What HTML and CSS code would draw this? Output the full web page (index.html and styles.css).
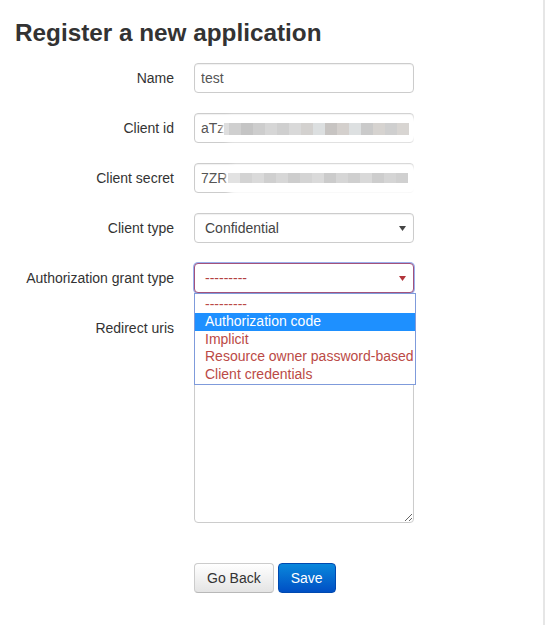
FILE: index.html
```html
<!DOCTYPE html>
<html lang="en">
<head>
<meta charset="utf-8">
<title>Register a new application</title>
<link rel="stylesheet" href="styles.css">
</head>
<body>
<div class="page">
  <h1 class="title">Register a new application</h1>
  <form class="form">
    <div class="row">
      <label class="label">Name</label>
      <input class="input" type="text" value="test">
    </div>
    <div class="row">
      <label class="label">Client id</label>
      <div class="field">
        <input class="input" type="text" value="aTz">
        <div class="haze haze-id"></div>
        <div class="mosaic mosaic-id"></div>
      </div>
    </div>
    <div class="row">
      <label class="label">Client secret</label>
      <div class="field">
        <input class="input" type="text" value="7ZR">
        <div class="haze haze-secret"></div>
        <div class="mosaic mosaic-secret"></div>
      </div>
    </div>
    <div class="row">
      <label class="label">Client type</label>
      <div class="select">
        <span>Confidential</span>
        <svg class="arrow" width="7" height="5" viewBox="0 0 7 5"><path d="M0 0H7L3.5 5Z" fill="#444"/></svg>
      </div>
    </div>
    <div class="row">
      <label class="label">Authorization grant type</label>
      <div class="field">
        <div class="select select-focus">
          <span>---------</span>
          <svg class="arrow" width="7" height="5" viewBox="0 0 7 5"><path d="M0 0H7L3.5 5Z" fill="#b2343a"/></svg>
        </div>
        <ul class="menu">
          <li class="opt">---------</li>
          <li class="opt opt-active">Authorization code</li>
          <li class="opt">Implicit</li>
          <li class="opt">Resource owner password-based</li>
          <li class="opt">Client credentials</li>
        </ul>
      </div>
    </div>
    <div class="row row-top">
      <label class="label">Redirect uris</label>
      <textarea class="textarea"></textarea>
    </div>
    <div class="actions">
      <button type="button" class="btn btn-default">Go Back</button>
      <button type="button" class="btn btn-primary">Save</button>
    </div>
  </form>
</div>
</body>
</html>
```

FILE: styles.css
```css
html, body {
  margin: 0;
  padding: 0;
  background: #fff;
}

body {
  font-family: "Liberation Sans", Arial, sans-serif;
  font-size: 14px;
  color: #333;
}

.page {
  box-sizing: border-box;
  width: 545px;
  height: 625px;
  border-right: 2px solid #e6e6e6;
  overflow: hidden;
}

.title {
  margin: 18px 0 0 15px;
  font-size: 24.3px;
  line-height: 30px;
  font-weight: bold;
  color: #333;
}

.form {
  margin-top: 15px;
}

.row {
  display: grid;
  grid-template-columns: 174px 220px;
  column-gap: 20px;
  align-items: center;
  margin-bottom: 20px;
}

.row-top {
  align-items: start;
}

.label {
  text-align: right;
  line-height: 30px;
  font-size: 14px;
  color: #333;
}

.field {
  position: relative;
  height: 30px;
}

.input,
.select,
.textarea {
  box-sizing: border-box;
  width: 220px;
  border: 1px solid #ccc;
  border-radius: 4px;
  background: #fff;
  font-family: "Liberation Sans", Arial, sans-serif;
  font-size: 14px;
  box-shadow: inset 0 1px 1px rgba(0, 0, 0, 0.06);
}

.input {
  display: block;
  height: 30px;
  padding: 0 6px;
  color: #555;
  outline: none;
}

.haze {
  position: absolute;
  background: #fff;
  border-radius: 10px;
  filter: blur(2px);
}

.haze-id {
  left: 28px;
  top: 3px;
  width: 198px;
  height: 26px;
}

.haze-secret {
  left: 32px;
  top: 2px;
  width: 194px;
  height: 30px;
}

.mosaic {
  position: absolute;
  height: 12px;
}

.mosaic-id {
  left: 30px;
  top: 10px;
  width: 185px;
  height: 12px;
  background: linear-gradient(90deg,
    #dedede 0 5px, #cfcfcf 5px 17px, #c4c4c4 17px 29px, #cdcdcd 29px 41px,
    #d6d6d6 41px 53px, #cfcfcf 53px 65px, #d9d9d9 65px 77px, #d3d1cf 77px 89px,
    #dcdfe0 89px 101px, #c7c4c2 101px 113px, #d4d0cd 113px 125px, #dde0e1 125px 137px,
    #cacaca 137px 149px, #d6d3d0 149px 161px, #cfcfcf 161px 173px, #d8d5d2 173px 185px);
}

.mosaic-secret {
  left: 34px;
  top: 10px;
  width: 180px;
  height: 10px;
  background: linear-gradient(90deg,
    #e2e2e2 0 12px, #d3d3d3 12px 24px, #dadada 24px 36px, #cfcfcf 36px 48px,
    #d7d7d7 48px 60px, #cdcdcd 60px 72px, #d4d4d4 72px 84px, #dadada 84px 96px,
    #cbcbcb 96px 108px, #d6d6d6 108px 120px, #cfcfcf 120px 132px, #d9d9d9 132px 144px,
    #cdcdcd 144px 156px, #d5d5d5 156px 168px, #d0d0d0 168px 180px);
}

.select {
  display: flex;
  align-items: center;
  justify-content: space-between;
  height: 30px;
  padding: 0 7px 0 10px;
  color: #444;
}

.arrow {
  display: block;
  margin-top: 1px;
}

.select-focus {
  border-color: #a2527c;
  color: #b3403f;
  box-shadow: 0 0 0 1px rgba(120, 150, 230, 0.75);
}

.menu {
  position: absolute;
  left: 0;
  top: 30px;
  z-index: 5;
  box-sizing: border-box;
  width: 222px;
  margin: 0;
  padding: 1.5px 0 1px;
  list-style: none;
  background: #fff;
  border: 1px solid #7f9bdb;
}

.opt {
  padding: 0 4px 0 10px;
  line-height: 17.5px;
  height: 17.5px;
  font-size: 14px;
  color: #bb4a46;
  white-space: nowrap;
}

.opt-active {
  background: #1e90ff;
  color: #fff;
}

.textarea {
  display: block;
  height: 210px;
  padding: 6px;
  resize: both;
  color: #555;
}

.actions {
  display: flex;
  gap: 4px;
  margin-top: 40px;
  padding-left: 194px;
}

.btn {
  box-sizing: border-box;
  height: 30px;
  padding: 0 12px;
  border-radius: 4px;
  font-family: "Liberation Sans", Arial, sans-serif;
  font-size: 14px;
  line-height: 28px;
  cursor: pointer;
}

.btn-default {
  color: #333;
  background: linear-gradient(#ffffff, #e4e4e4);
  border: 1px solid #cccccc;
  border-bottom-color: #b8b8b8;
}

.btn-primary {
  color: #fff;
  background: linear-gradient(#0a88dc, #004fc4);
  border: 1px solid #0049b0;
}
```
